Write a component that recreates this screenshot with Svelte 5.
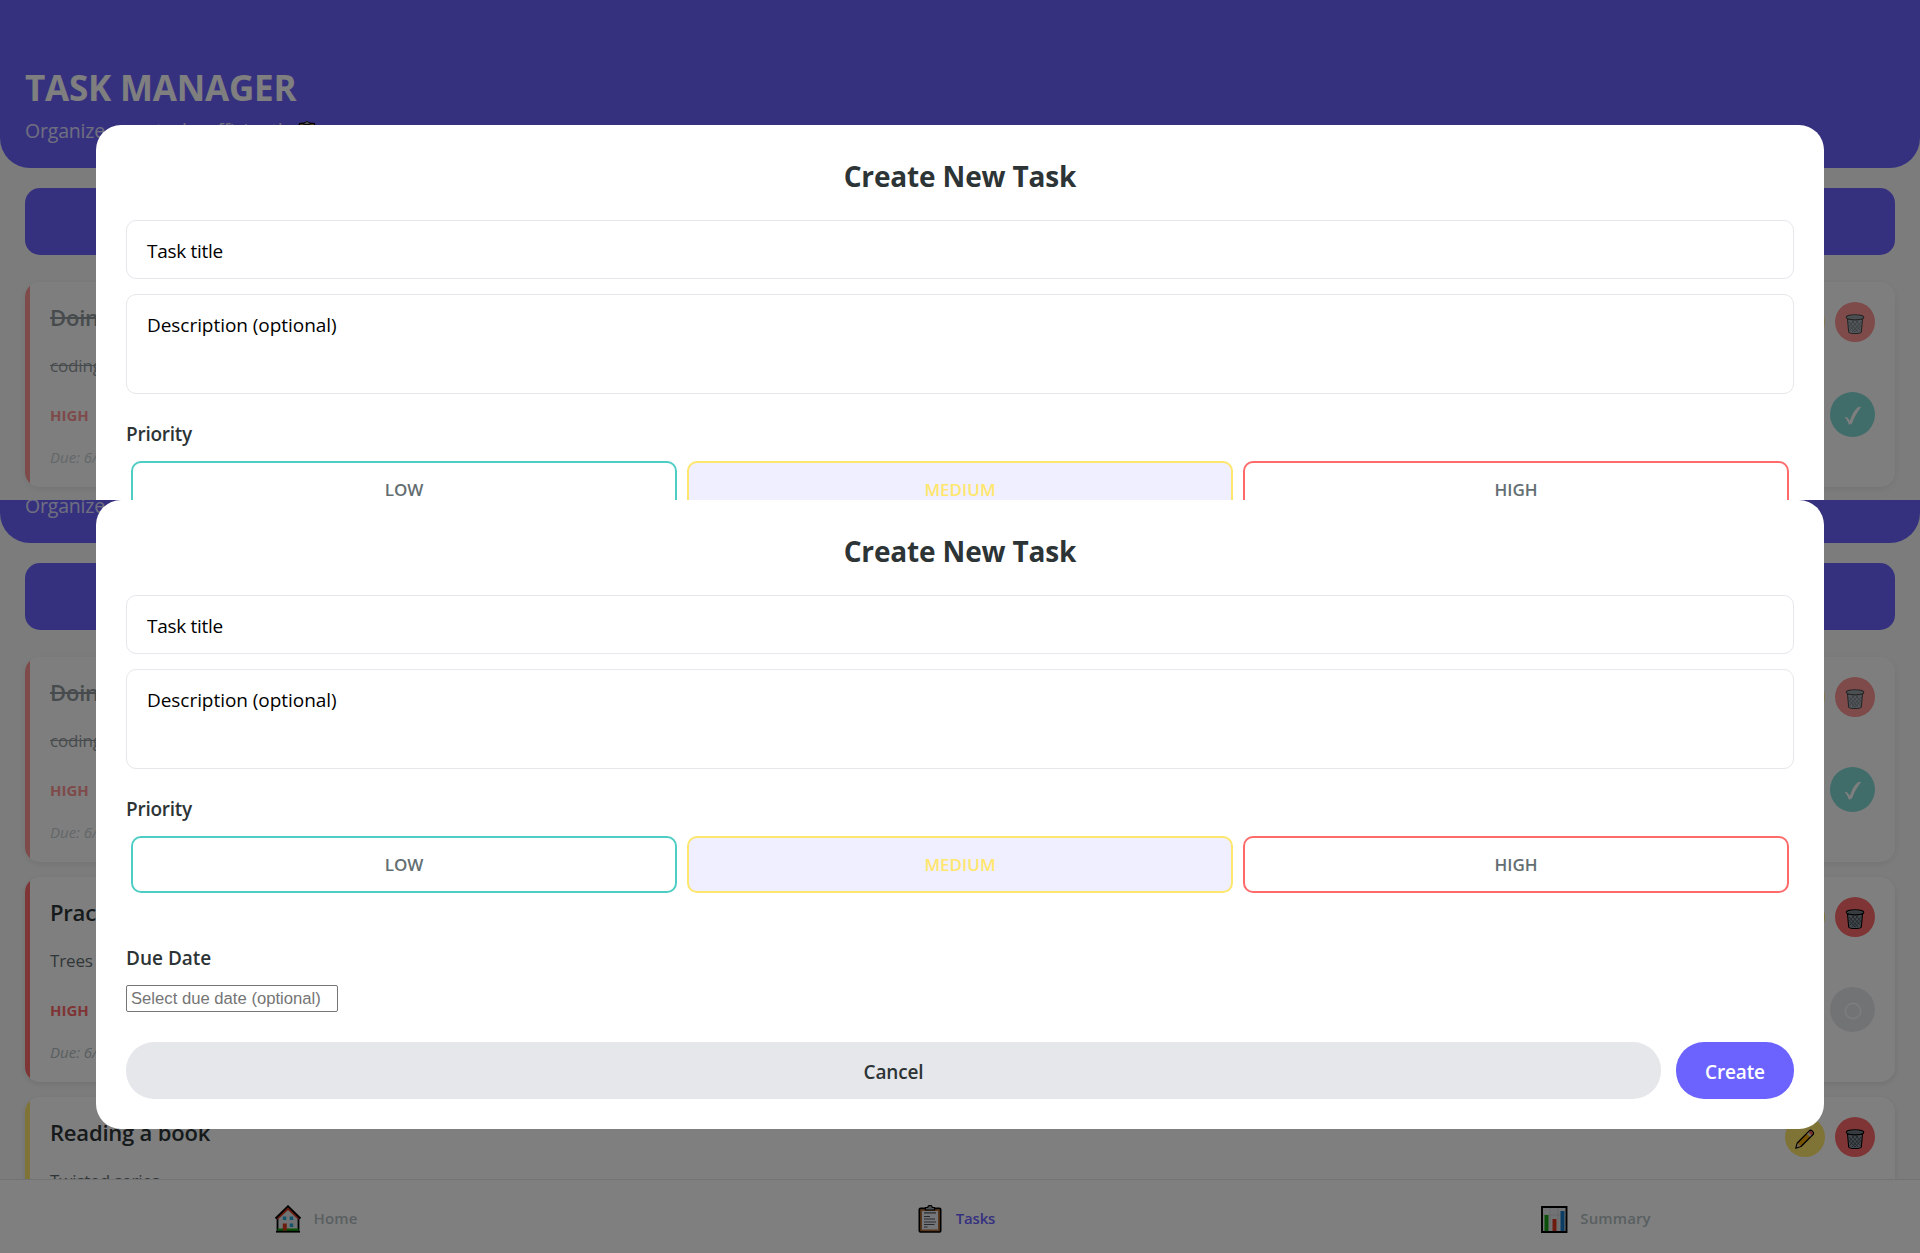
<script>
  const tasks = [
    { title: 'Doing homework', text: 'coding assignment', priority: 'HIGH', due: 'Due: 6/20/2025', tone: 'high', done: true },
    { title: 'Practice DSA', text: 'Trees and graphs', priority: 'HIGH', due: 'Due: 6/21/2025', tone: 'high', done: false },
    { title: 'Reading a book', text: 'Twisted series', priority: 'MEDIUM', due: 'Due: 6/22/2025', tone: 'medium', done: false }
  ];
  const priorities = [
    { label: 'LOW', tone: 'low' },
    { label: 'MEDIUM', tone: 'medium' },
    { label: 'HIGH', tone: 'high' }
  ];
</script>

{#snippet clipboard(cls)}
  <svg class={cls} viewBox="0 0 28 28">
    <rect x="2.500" y="2.500" width="23" height="25.300" rx="2" fill="#000" />
    <rect x="4.200" y="4.200" width="19.600" height="22" fill="#b5713a" />
    <path d="M6 6h16v18.500H6z" fill="#e9edf2" />
    <path d="M9.500 5V2.500h2.200C12 1 13 .4 14 .4s2 .6 2.300 2.100h2.200V5z" fill="#9aa0a6" stroke="#000" stroke-width="1.200" />
    <path d="M8 7.800h12M8 11.500h6M8 14h11M8 17h12M8 19.500h10.500M8 22h3.500" stroke="#50555a" stroke-width="1.200" fill="none" />
  </svg>
{/snippet}

{#snippet trash()}
  <svg class="trash" viewBox="0 0 20 20">
    <path d="M2.500 5l1.200 13c.1.900 2.400 1.500 6.300 1.500s6.200-.6 6.300-1.500L17.500 5z" fill="#84919a" stroke="#000" stroke-width="1.100" />
    <path d="M4 8l9 10M4.500 12l5.500 6M7 7l8.500 9.500M11 7l5 5.500M16 8l-9 10M15.500 12l-5.500 6M13 7l-8.500 9.500M9 7l-5 5.500" stroke="#39434a" stroke-width=".8" />
    <ellipse cx="10" cy="3.300" rx="8.800" ry="2.600" fill="#84919a" stroke="#000" stroke-width="1.100" />
    <ellipse cx="10" cy="3.500" rx="6.800" ry="1.300" fill="#68747c" />
  </svg>
{/snippet}

{#snippet screen()}
  <div class="screen">
    <header>
      <h1>TASK MANAGER</h1>
      <p class="tagline"><span>Organize your tasks efficiently</span>{@render clipboard('tag-icon')}</p>
    </header>
    <div class="add"></div>
    <main>
      {#each tasks as task}
        <article class="card {task.tone}" class:done={task.done}>
          <div class="info">
            <h3>{task.title}</h3>
            <p class="text">{task.text}</p>
            <p class="level">{task.priority}</p>
            <p class="due">{task.due}</p>
          </div>
          <div class="actions">
            <div class="tools">
              <span class="round edit">
                <svg class="pencil" viewBox="0 0 20 20">
                  <path d="M.8 19.200l1.500-5.200L14.500 1.600c1.500-1.300 5 1.700 3.700 3.600L6 17.500z" fill="#f2a900" stroke="#000" stroke-width="1.300" stroke-linejoin="round" />
                  <path d="M1.500 18.500l1.300-4.200 2.800 2.800z" fill="#f0d0a0" />
                  <path d="M12.800 4.100l2.900 3" stroke="#d5dbe0" stroke-width="2" />
                  <path d="M15 2.200c1.200-.7 3.500 1.300 2.700 2.700l-1 1.100-2.800-2.700z" fill="#f0566a" />
                </svg>
              </span>
              <span class="round delete">{@render trash()}</span>
            </div>
            <span class="toggle">
              {#if task.done}
                <svg class="tick" viewBox="0 0 18 20"><path d="M.8 11.300c1.700-.9 3.400.6 5 3.700C7.500 9.500 10 4.500 13.800 1.300l3.400-.5C13 6.500 10 11.500 8 17.600l-3 1.200C3.800 15.500 2.500 13 .8 11.300z" fill="#fff" /></svg>
              {:else}
                <svg class="tick" viewBox="0 0 18 20"><circle cx="9" cy="10" r="7.700" fill="none" stroke="#fff" stroke-width="1.200" /></svg>
              {/if}
            </span>
          </div>
        </article>
      {/each}
    </main>
    <nav>
      <div class="tab">
        <svg class="tab-icon" viewBox="0 0 28 28">
          <path d="M3.500 12.500v13h21v-13L14 3z" fill="#e4e7ea" stroke="#000" stroke-width="1.800" />
          <path d="M3.500 23.500h21v2.300h-21z" fill="#16a010" />
          <path d="M2 26.800h24" stroke="#000" stroke-width="1.600" />
          <path d="M3 13.500L14 3.200l11 10.300" fill="none" stroke="#d83b1f" stroke-width="2.600" />
          <path d="M1.500 13.500L14 1.200l12.500 12.300" fill="none" stroke="#000" stroke-width="1.800" />
          <path d="M8.800 18.500h4v7h-4z" fill="#d83b1f" />
          <path d="M8.800 11.500h3.500V15H8.800zM15.700 11.500h3.500V15h-3.500zM15.700 18.500h3.500V22h-3.500z" fill="#27a8d8" />
        </svg>
        <span>Home</span>
      </div>
      <div class="tab active">{@render clipboard('tab-icon')}<span>Tasks</span></div>
      <div class="tab">
        <svg class="tab-icon" viewBox="0 0 28 28">
          <path d="M2 2h24.500v25H2z" fill="#e4e7ea" stroke="#000" stroke-width="1.900" />
          <path d="M10 3v23M18 3v23M3 10h22.500" stroke="#c9cdd0" stroke-width=".8" />
          <path d="M4.500 10h4v16h-4z" fill="#16a010" />
          <path d="M12.500 14h4v12h-4z" fill="#d83b1f" />
          <path d="M20.500 6h4v20h-4z" fill="#1679c8" />
        </svg>
        <span>Summary</span>
      </div>
    </nav>
    <div class="overlay">
      <section class="modal">
        <h2>Create New Task</h2>
        <div class="field title-field"><span>Task title</span></div>
        <div class="field area"><span>Description (optional)</span></div>
        <p class="label priority-label">Priority</p>
        <div class="options">
          {#each priorities as p}
            <div class="option {p.tone}"><span>{p.label}</span></div>
          {/each}
        </div>
        <p class="label date-label">Due Date</p>
        <input class="date" placeholder="Select due date (optional)" />
        <div class="buttons">
          <button class="cancel">Cancel</button>
          <button class="create">Create</button>
        </div>
      </section>
    </div>
  </div>
{/snippet}

<div class="page">
  <div class="slice top">{@render screen()}</div>
  <div class="slice bottom">{@render screen()}</div>
</div>

<style>
  :global(body) { margin: 0; }
  .page { width: 1920px; height: 1253px; overflow: hidden; font-family: "Segoe UI", "Open Sans", "Noto Sans", sans-serif; }
  .page :is(h1, h2, h3, p) { margin: 0; }
  .slice { overflow: hidden; display: flow-root; }
  .top { height: 500px; }
  .bottom { height: 753px; }
  .bottom .screen { margin-top: -125px; }
  .screen { position: relative; height: 878px; overflow: hidden; background: #f8f9fa; }
  header { box-sizing: border-box; height: 168px; padding: 63px 25px 0; background: #6c63ff; border-radius: 0 0 30px 30px; color: #fff; }
  h1 { font-size: 35px; line-height: 50px; font-weight: 700; letter-spacing: -0.2px; }
  .tagline { display: flex; gap: 5px; align-items: center; font-size: 19.500px; line-height: 36px; color: rgba(255, 255, 255, .8); letter-spacing: -0.18px; }
  .tag-icon { width: 20px; height: 20px; }
  .add { height: 67px; margin: 20px 25px 27px; border-radius: 15px; background: #6c63ff; }
  main { display: flex; flex-direction: column; gap: 15px; padding: 0 25px; }
  .card { --tone: #ff6b6b; box-sizing: border-box; flex: none; height: 205px; display: flex; justify-content: space-between; padding: 20px 20px 20px 25px; border-radius: 15px; background: linear-gradient(90deg, var(--tone) 5px, #fff 5px); box-shadow: 0 2px 6px rgba(0, 0, 0, .1); }
  .card.medium { --tone: #ffe66d; }
  .card.done { opacity: .7; }
  h3 { font-size: 22px; line-height: 30px; font-weight: 600; color: #2d3436; letter-spacing: -0.2px; }
  .text { padding-top: 21px; font-size: 17px; line-height: 26px; color: #636e72; letter-spacing: -0.15px; }
  .level { padding-top: 25px; font-size: 15px; line-height: 22px; font-weight: 700; color: var(--tone); }
  .due { padding-top: 21px; font-size: 15px; line-height: 20px; font-style: italic; color: #b2bec3; }
  .done h3, .done .text { text-decoration: line-through; color: #636e72; }
  .actions { display: flex; flex-direction: column; align-items: flex-end; gap: 50px; }
  .tools { display: flex; gap: 10px; }
  .round, .toggle { display: flex; align-items: center; justify-content: center; border-radius: 50%; }
  .round { width: 40px; height: 40px; }
  .edit { background: #ffe66d; }
  .delete { background: #ff6b6b; }
  .toggle { width: 45px; height: 45px; background: #e5e7eb; }
  .done .toggle { background: #4ecdc4; }
  .trash { width: 20px; height: 20px; margin-top: 4px; }
  .pencil { width: 20px; height: 20px; margin-top: 4px; }
  .tick { width: 18px; height: 20px; margin-top: 3px; }
  nav { position: absolute; inset: auto 0 0; box-sizing: border-box; height: 74px; display: grid; grid-template-columns: repeat(3, 1fr); border-top: 1px solid #e5e7eb; background: #fff; }
  .tab { display: flex; align-items: center; justify-content: center; gap: 12px; padding: 4px 9px 0 0; font-size: 15px; line-height: 24px; font-weight: 600; color: #b2bec3; letter-spacing: 0.1px; }
  .tab span { padding-bottom: 1px; }
  .tab.active { color: #6c63ff; letter-spacing: -0.2px; }
  .tab-icon { width: 28px; height: 28px; }
  .overlay { position: absolute; inset: 0; display: flex; align-items: center; justify-content: center; background: rgba(0, 0, 0, .5); }
  .modal { box-sizing: border-box; width: 90%; height: 629px; padding: 30px; border-radius: 25px; background: #fff; color: #2d3436; }
  h2 { height: 65px; text-align: center; font-size: 28px; line-height: 42px; font-weight: 700; letter-spacing: -0.15px; }
  .field { box-sizing: border-box; padding: 16px 20px; border: 1px solid #e5e7eb; border-radius: 10px; font-size: 19px; line-height: 28px; color: #000; letter-spacing: -0.05px; }
  .title-field { height: 59px; margin-bottom: 15px; letter-spacing: -0.3px; }
  .area { height: 100px; }
  .label { font-size: 19px; line-height: 26px; font-weight: 600; }
  .priority-label { padding: 27px 0 14px; letter-spacing: -0.25px; }
  .options { display: grid; grid-template-columns: repeat(3, 1fr); gap: 10px; padding: 0 5px; }
  .option { box-sizing: border-box; height: 57px; display: flex; align-items: center; justify-content: center; padding-top: 1px; border: 2px solid #4ecdc4; border-radius: 10px; font-size: 17px; font-weight: 600; color: #636e72; }
  .option.medium { border-color: #ffe66d; background: #f0efff; color: #ffe66d; }
  .option.high { border-color: #ff6b6b; }
  .date-label { padding: 52px 0 14px; }
  .date { display: block; box-sizing: border-box; width: 212px; height: 27px; margin: 0; padding: 2px 4px 0; border: 1px solid #767676; border-radius: 2px; font: 16.670px "Liberation Sans", sans-serif; }
  .date::placeholder { color: #757575; }
  .buttons { display: flex; gap: 15px; padding-top: 30px; }
  button { height: 57px; padding: 4px 0 0; border: 0; border-radius: 28px; font: 600 19px "Segoe UI", "Open Sans", sans-serif; letter-spacing: -0.15px; }
  .cancel { flex: 1; background: #e5e7eb; color: #2d3436; }
  .create { width: 118px; background: #6c63ff; color: #fff; }
</style>
